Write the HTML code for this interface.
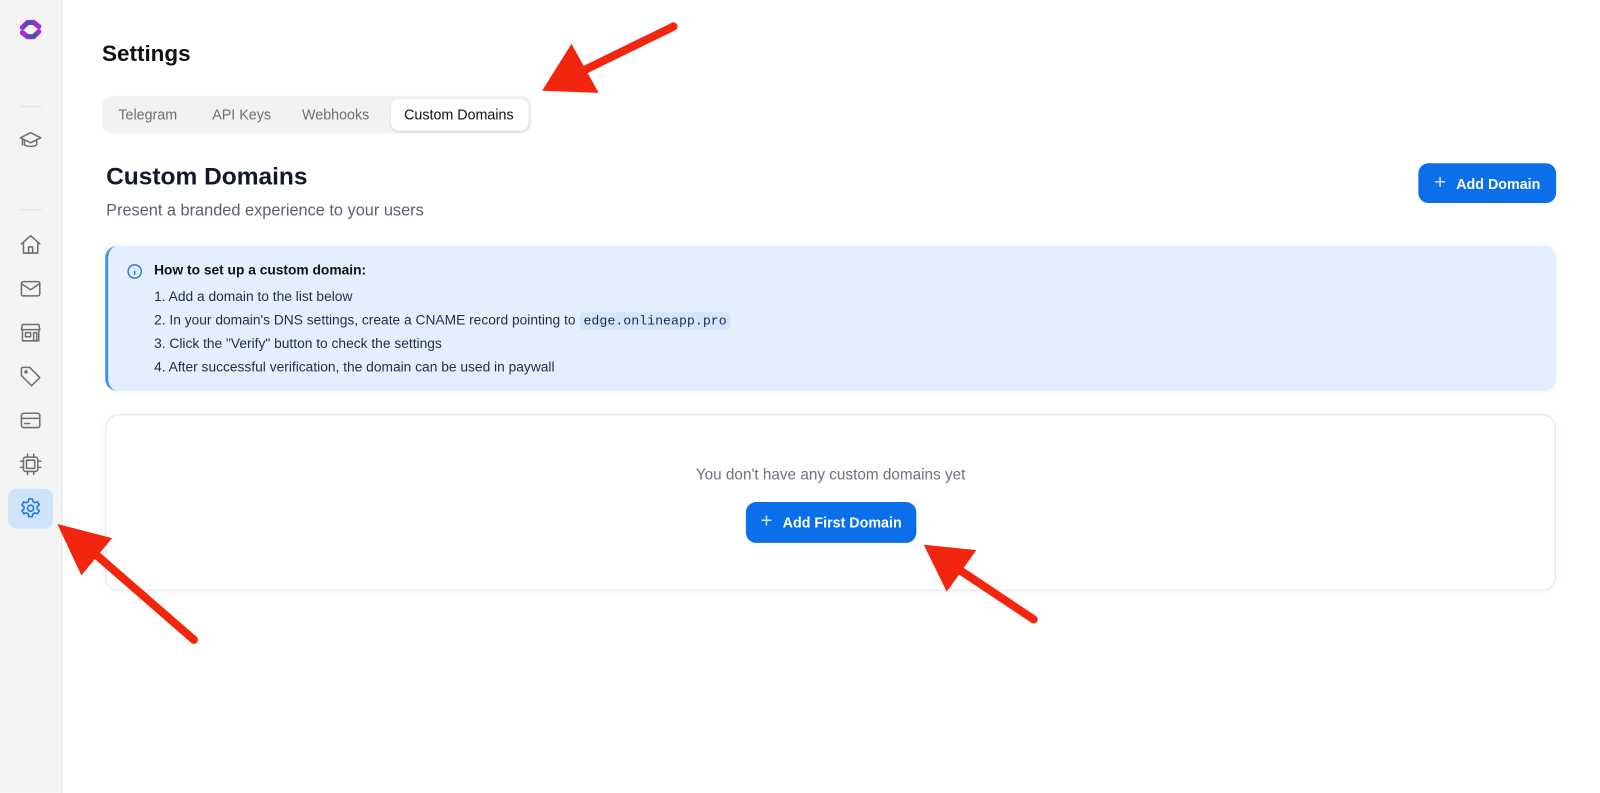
<!DOCTYPE html>
<html><head><meta charset="utf-8"><style>
*{box-sizing:border-box;margin:0;padding:0}
body{width:1600px;height:777px;background:#fff;font-family:"Liberation Sans",sans-serif;position:relative;overflow:hidden;color:#111827}
#w{position:absolute;left:0;top:0;width:1568px;height:762px;transform:scale(1.0204);transform-origin:0 0}
.side{position:absolute;left:0;top:0;width:61px;height:777px;background:#f4f4f5;border-right:1px solid #e2e2e2}
.ic{position:absolute;left:18px;width:24px;height:24px}
.ic svg{width:24px;height:24px;fill:none;stroke:#6b6f76;stroke-width:1.5;stroke-linecap:round;stroke-linejoin:round}
.div{position:absolute;left:20px;width:21px;height:1px;background:#e0e0e0}
.abs{position:absolute}
.btn{position:absolute;background:#0a6fe9;color:#fff;border-radius:10px;font-size:14px;font-weight:bold;display:flex;align-items:center;justify-content:center;gap:10px}
.btn span.p{font-weight:normal;font-size:20px;line-height:1;margin-top:-2px;color:#cfe2fb}
.info li{list-style:none;font-size:13.5px;color:#1f2d4a;height:23px}
code{font-family:"Liberation Mono",monospace;background:#d3e5fa;padding:1px 4px;border-radius:4px;font-size:13px}
</style></head><body><div id="w">
<div class="side">
 <svg class="abs" style="left:17px;top:16px" width="26" height="26" viewBox="0 0 26 26" fill="none" stroke-linecap="round" stroke-linejoin="round">
  <path d="M5 11 L10 6 L16 6 L21 10" stroke="#9b2fd0" stroke-width="5"/>
  <path d="M5 16 L10 20 L16 20 L21 15" stroke="#9b2fd0" stroke-width="5"/>
  <path d="M8 9 L10.5 6.5 L14 6.5" stroke="#3d5a9f" stroke-width="3"/>
  <path d="M12 19.5 L15.5 19.5 L18 17" stroke="#3d5a9f" stroke-width="3"/>
 </svg>
 <div class="div" style="top:104px"></div>
 <div class="ic" style="top:125px"><svg viewBox="0 0 24 24"><path d="M2 10l10-5 10 5-10 5z"/><path d="M6 12v5c3 2 9 2 12 0v-5"/><path d="M4 11v6"/></svg></div>
 <div class="div" style="top:205px"></div>
 <div class="ic" style="top:228px"><svg viewBox="0 0 24 24"><path d="M3 11l9-8 9 8"/><path d="M5 9.5V20h14V9.5"/><path d="M10 20v-6h4v6"/></svg></div>
 <div class="ic" style="top:271px"><svg viewBox="0 0 24 24"><rect x="3" y="5" width="18" height="14" rx="2"/><path d="M3 7l9 6 9-6"/></svg></div>
 <div class="ic" style="top:314px"><svg viewBox="0 0 24 24"><path d="M4 4h16l1 5H3z"/><path d="M4 9v11h16V9"/><rect x="7" y="12" width="5" height="4"/><path d="M15 20v-8h3v8"/></svg></div>
 <div class="ic" style="top:357px"><svg viewBox="0 0 24 24"><path d="M3 4v7l10 10 8-8L11 3H4z"/><circle cx="7.5" cy="7.5" r="1"/></svg></div>
 <div class="ic" style="top:400px"><svg viewBox="0 0 24 24"><rect x="3" y="5" width="18" height="14" rx="2"/><path d="M3 10h18M6 15h5"/></svg></div>
 <div class="ic" style="top:443px"><svg viewBox="0 0 24 24"><rect x="5" y="5" width="14" height="14" rx="2"/><rect x="8" y="8" width="8" height="8"/><path d="M9 2v3M15 2v3M9 19v3M15 19v3M2 9h3M2 15h3M19 9h3M19 15h3"/></svg></div>
 <div class="abs" style="left:8px;top:479px;width:44px;height:39px;background:#cfe3fb;border-radius:8px"></div>
 <div class="ic" style="top:486px"><svg viewBox="0 0 24 24" style="stroke:#1a73e8"><circle cx="12" cy="12" r="3"/><path d="M10.3 3h3.4l.6 2.6 2 1.1 2.5-.9 1.7 2.9-2 1.8v2.3l2 1.8-1.7 2.9-2.5-.9-2 1.1-.6 2.6h-3.4l-.6-2.6-2-1.1-2.5.9-1.7-2.9 2-1.8v-2.3l-2-1.8 1.7-2.9 2.5.9 2-1.1z"/></svg></div>
</div>

<div class="abs" style="left:100px;top:40px;font-size:22px;font-weight:bold;color:#111">Settings</div>
<div class="abs" style="left:100px;top:94px;width:421px;height:37px;background:#f2f2f3;border-radius:10px"></div>
<div class="abs" style="left:383px;top:97px;width:135px;height:31px;background:#fff;border-radius:8px;box-shadow:0 1px 2px rgba(0,0,0,.1)"></div>
<div class="abs" style="left:116px;top:104px;font-size:14px;color:#6b6f76">Telegram</div>
<div class="abs" style="left:208px;top:104px;font-size:14px;color:#6b6f76">API Keys</div>
<div class="abs" style="left:296px;top:104px;font-size:14px;color:#6b6f76">Webhooks</div>
<div class="abs" style="left:396px;top:104px;font-size:14px;color:#111">Custom Domains</div>

<div class="abs" style="left:104px;top:160px;font-size:24px;font-weight:bold;color:#111827">Custom Domains</div>
<div class="abs" style="left:104px;top:198px;font-size:16px;color:#5b6170">Present a branded experience to your users</div>
<div class="btn" style="left:1390px;top:160px;width:135px;height:39px"><span class="p">+</span>Add Domain</div>

<div class="abs info" style="left:103px;top:241px;width:1422px;height:142px;background:#e3effc;border-radius:12px;border-left:3px solid #3b8ff0;box-shadow:0 0 6px rgba(0,0,0,.05)">
 <svg class="abs" style="left:18px;top:17px" width="16" height="16" viewBox="0 0 16 16" fill="none" stroke="#1a73e8" stroke-width="1.3"><circle cx="8" cy="8" r="6.5"/><path d="M8 7.3v4M8 4.7v.3"/></svg>
 <div class="abs" style="left:45px;top:16px;font-size:13.5px;font-weight:bold;color:#111">How to set up a custom domain:</div>
 <ul class="abs" style="left:45px;top:42px">
  <li>1. Add a domain to the list below</li>
  <li>2. In your domain's DNS settings, create a CNAME record pointing to <code>edge.onlineapp.pro</code></li>
  <li>3. Click the "Verify" button to check the settings</li>
  <li>4. After successful verification, the domain can be used in paywall</li>
 </ul>
</div>

<div class="abs" style="left:103px;top:406px;width:1422px;height:173px;background:#fff;border:1px solid #e6e6e6;border-radius:14px;box-shadow:0 0 6px rgba(0,0,0,.04)"></div>
<div class="abs" style="left:103px;top:457px;width:1422px;text-align:center;font-size:15px;color:#6b7280">You don't have any custom domains yet</div>
<div class="btn" style="left:731px;top:492px;width:167px;height:40px"><span class="p">+</span>Add First Domain</div>

<svg class="abs" style="left:0;top:0" width="1600" height="777">
 <g stroke="#f2260f" stroke-width="8" fill="#f2260f" stroke-linecap="round">
  <line x1="660" y1="26" x2="570" y2="70"/><polygon points="533,88 560,45 585,90" stroke-width="2"/>
  <line x1="190" y1="627" x2="90" y2="540"/><polygon points="58,515 108,528 80,562" stroke-width="2"/>
  <line x1="1013" y1="607" x2="935" y2="555"/><polygon points="907,535 955,540 928,578" stroke-width="2"/>
 </g>
</svg>
</div></body></html>
